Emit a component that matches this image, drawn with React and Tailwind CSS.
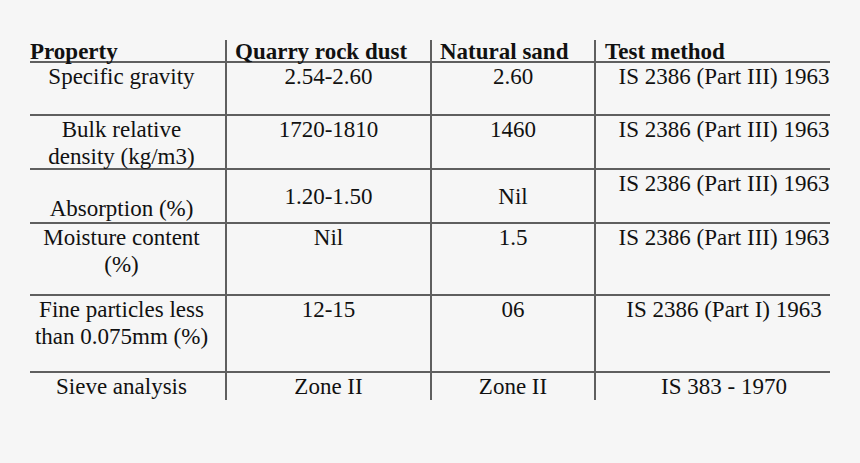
const rows = [
  { h: 'h-[53px]', cells: [['Specific gravity'], ['2.54-2.60'], ['2.60'], ['IS 2386 (Part III) 1963']] },
  { h: 'h-[54px]', cells: [['Bulk relative', 'density (kg/m3)'], ['1720-1810'], ['1460'], ['IS 2386 (Part III) 1963']] },
  { h: 'h-[54px]', cells: [['Absorption (%)'], ['1.20-1.50'], ['Nil'], ['IS 2386 (Part III) 1963']], align: ['justify-end', 'justify-center', 'justify-center', 'justify-start'] },
  { h: 'h-[72px]', cells: [['Moisture content', '(%)'], ['Nil'], ['1.5'], ['IS 2386 (Part III) 1963']] },
  { h: 'h-[77px]', cells: [['Fine particles less', 'than 0.075mm (%)'], ['12-15'], ['06'], ['IS 2386 (Part I) 1963']] },
  { h: 'h-[27px]', cells: [['Sieve analysis'], ['Zone II'], ['Zone II'], ['IS 383 - 1970']], last: true },
]

const pads = ['pr-[12px]', '', '', 'pl-[22px]']
const lines = ['', 'border-l-2 border-[#5f5f5f]', 'border-l-2 border-[#5f5f5f]', 'border-l-2 border-[#5f5f5f]']

export default function App() {
  return (
    <div className="w-[860px] h-[463px] bg-[#f6f6f6] pt-[40px] pl-[30px] text-[#111] text-[23px] leading-[27px]" style={{ fontFamily: '"Liberation Serif", "Times New Roman", serif' }}>
      <div className="w-[800px]">
        <div className="grid grid-cols-[195px_205px_164px_236px] h-[23px] border-b-2 border-[#5f5f5f] font-bold leading-[24px]">
          <div className="flex items-end whitespace-nowrap pb-[2px]">Property</div>
          <div className={`flex items-end whitespace-nowrap pl-[8px] pb-[2px] ${lines[1]}`}>Quarry rock dust</div>
          <div className={`flex items-end whitespace-nowrap pl-[8px] pb-[2px] ${lines[2]}`}>Natural sand</div>
          <div className={`flex items-end whitespace-nowrap pl-[9px] pb-[2px] ${lines[3]}`}>Test method</div>
        </div>
        {rows.map((row, i) => (
          <div key={i} className={`grid grid-cols-[195px_205px_164px_236px] ${row.h} ${row.last ? '' : 'border-b-2 border-[#5f5f5f]'}`}>
            {row.cells.map((cell, j) => (
              <div key={j} className={`flex flex-col ${row.align ? row.align[j] : 'justify-start'} text-center whitespace-nowrap ${pads[j]} ${lines[j]}`}>
                {cell.map((t, k) => <div key={k}>{t}</div>)}
              </div>
            ))}
          </div>
        ))}
      </div>
    </div>
  )
}
